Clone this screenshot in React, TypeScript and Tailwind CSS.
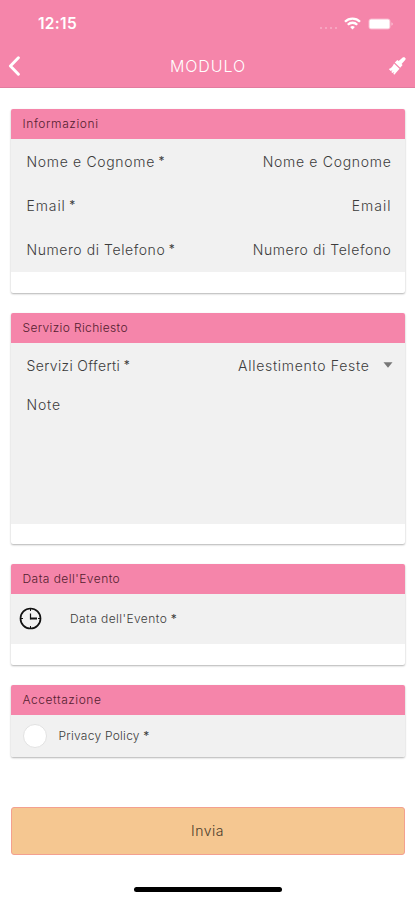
import type { ReactNode } from "react";

function Card({ title, titleClass, className, children }: { title: string; titleClass: string; className: string; children: ReactNode }) {
  return (
    <section className={`mx-[10.5px] overflow-hidden rounded-[2px] bg-white shadow-[0_1px_2px_rgba(0,0,0,0.3)] ${className}`}>
      <h2 className="flex h-[30px] items-center bg-[#f585aa] pl-3 text-[12px] font-light text-[#54202f]">
        <span className={titleClass}>{title}</span>
      </h2>
      {children}
    </section>
  );
}

function Label({ text, className }: { text: string; className: string }) {
  return (
    <label className="flex items-center">
      <span className={className}>{text}</span>
      <span className="ml-[3.5px] pb-px text-[12px] font-normal">*</span>
    </label>
  );
}

function Field({ label, value, labelClass, valueClass }: { label: string; value: string; labelClass: string; valueClass: string }) {
  return (
    <div className="flex h-11 items-center justify-between pr-[13px] pl-4 text-[14px] font-light text-[#3c3c3c]">
      <Label text={label} className={labelClass} />
      <span className={valueClass}>{value}</span>
    </div>
  );
}

export default function App() {
  return (
    <main className="flex h-[900px] w-[415px] flex-col overflow-hidden bg-white font-[Inter,'Noto_Sans',sans-serif] whitespace-nowrap">
      <header className="h-[88px] shrink-0 border-b border-[#e27c9f] bg-[#f585aa] text-white">
        <div className="flex h-[45px] items-center pt-[2px] pr-[22px] pl-[38px]">
          <time className="text-[15.5px] font-semibold tracking-[0.3px]">12:15</time>
          <div className="ml-auto flex items-center">
            <span className="mt-[8px] flex gap-[3px] opacity-35">
              <i className="size-[2px] rounded-full bg-white" />
              <i className="size-[2px] rounded-full bg-white" />
              <i className="size-[2px] rounded-full bg-white" />
              <i className="size-[2px] rounded-full bg-white" />
            </span>
            <svg className="ml-[7px]" width="17" height="13" viewBox="0 0 17 13" fill="none" stroke="white" strokeWidth="2.3">
              <path d="M1 4.8C5.2.6 11.8.6 16 4.8M3.8 7.7c2.6-2.6 6.8-2.6 9.4 0" />
              <path d="M6.1 10.1a3.4 3.4 0 0 1 4.8 0L8.5 12.5Z" fill="white" stroke="none" />
            </svg>
            <svg className="ml-[7px]" width="25" height="12" viewBox="0 0 25 12">
              <rect x=".5" y=".5" width="22" height="11" rx="3" fill="white" opacity=".4" />
              <rect x="1.5" y="1.5" width="20" height="9" rx="1.5" fill="white" />
              <path d="M23.4 4.2q1.5.5 1.5 1.8t-1.5 1.8Z" fill="white" opacity=".45" />
            </svg>
          </div>
        </div>
        <div className="flex h-[41px] items-center pr-[8px] pl-[8px]">
          <svg width="14" height="20" viewBox="0 0 14 20" fill="none" stroke="white" strokeWidth="2.9" strokeLinecap="round" strokeLinejoin="round">
            <path d="M10.4 1.8 2.4 10l8 8.2" />
          </svg>
          <h1 className="flex-1 pl-[7px] text-center text-[16px] font-light tracking-[0.95px]">MODULO</h1>
          <svg width="20" height="20" viewBox="0 0 20 20" fill="white">
            <path d="m17.5 1.2 1.2 1.2-.3 1.3-3.8 4.2 1 1.2-2.4 2.6-5.4-5.3 2.5-2.5 1.4 1.2 4.3-3.8Z" />
            <path d="m7 7.4 5.5 5.4-5.2 5.9-1-.9 1.1-1.7-2 1-1.1-1.1 1.2-1.7-1.9.8-1.8-2.1C4.3 12 6.1 10.1 7 7.4Z" />
          </svg>
        </div>
      </header>

      <Card title="Informazioni" titleClass="tracking-[0.6px]" className="mt-[21px] h-[184px] shrink-0">
        <div className="h-[133px] bg-[#f1f1f1]">
          <Field label="Nome e Cognome" value="Nome e Cognome" labelClass="tracking-[0.67px]" valueClass="tracking-[0.7px]" />
          <Field label="Email" value="Email" labelClass="tracking-[0.9px]" valueClass="tracking-[1px]" />
          <Field label="Numero di Telefono" value="Numero di Telefono" labelClass="tracking-[0.57px]" valueClass="tracking-[0.57px]" />
        </div>
      </Card>

      <Card title="Servizio Richiesto" titleClass="tracking-[0.35px]" className="mt-5 h-[231px] shrink-0">
        <div className="h-[181px] bg-[#f1f1f1] pr-[12px] pl-4 text-[14px] font-light text-[#3c3c3c]">
          <div className="flex h-[44px] items-center">
            <div className="flex-1"><Label text="Servizi Offerti" className="tracking-[0.35px]" /></div>
            <span className="mr-[13px] tracking-[0.7px]">Allestimento Feste</span>
            <svg width="10" height="6" viewBox="0 0 10 6" fill="#777"><path d="M.5.3h9L5 5.7Z" /></svg>
          </div>
          <label className="block pt-[7px] tracking-[0.8px]">Note</label>
        </div>
      </Card>

      <Card title="Data dell'Evento" titleClass="tracking-[0.46px]" className="mt-5 h-[101px] shrink-0">
        <div className="flex h-[50px] items-center bg-[#f1f1f1] pl-[8.5px] text-[12px] font-light text-[#3c3c3c]">
          <svg className="-mt-[2px]" width="23" height="23" viewBox="0 0 23 23" fill="none" stroke="#111">
            <circle cx="11.5" cy="11.5" r="10" strokeWidth="1.7" />
            <path d="M11.5 11.5H18" strokeWidth="2.1" />
            <path d="M11.5 6.5v6" strokeWidth="1.2" />
            <path d="M11.5 2v2m0 15v2M2 11.5h2m15 0h2" strokeWidth="1" />
          </svg>
          <div className="ml-[28px]"><Label text="Data dell'Evento" className="tracking-[0.43px]" /></div>
        </div>
      </Card>

      <Card title="Accettazione" titleClass="tracking-[0.55px]" className="mt-[19.5px] h-[72.5px] shrink-0">
        <div className="flex h-[42.5px] items-center bg-[#f1f1f1] pl-3 text-[12px] font-light text-[#3c3c3c]">
          <span className="size-6 rounded-full border border-[#e2e2e2] bg-white" />
          <div className="ml-3 pt-px"><Label text="Privacy Policy" className="tracking-[0.25px]" /></div>
        </div>
      </Card>

      <button className="mx-[10.5px] mt-[50px] h-[48px] shrink-0 rounded-[3px] border border-[#f3a08f] bg-[#f5c791] pb-[2px] text-[14px] font-light text-[#4c3d2c]">
        <span className="tracking-[0.5px]">Invia</span>
      </button>
      <div className="mx-auto mt-[32px] h-[5px] w-[148px] shrink-0 rounded-full bg-black" />
    </main>
  );
}
